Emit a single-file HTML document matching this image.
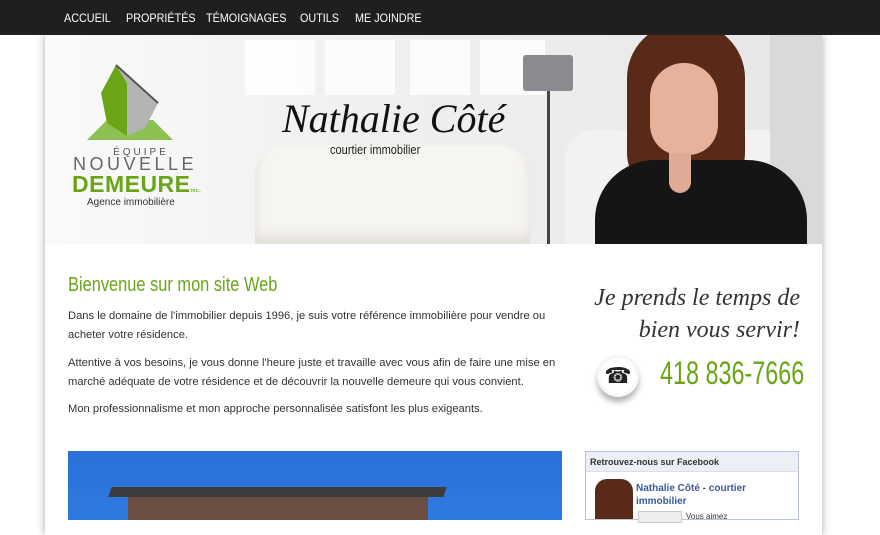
<!DOCTYPE html>
<html><head><meta charset="utf-8"><style>
*{margin:0;padding:0;box-sizing:border-box}
body{width:880px;height:520px;overflow:hidden;background:#fff;font-family:"Liberation Sans",sans-serif;position:relative}
.nav{position:absolute;left:0;top:0;width:880px;height:35px;background:#1f1f1f}
.nav span{position:absolute;top:11px;color:#fff;font-size:12px;white-space:nowrap;transform:scaleX(.9);transform-origin:left}
.wrap{position:absolute;left:45px;top:35px;width:777px;height:500px;background:#fff;box-shadow:0 0 8px rgba(0,0,0,.35)}
.hdr{position:absolute;left:45px;top:35px;width:777px;height:209px;background:linear-gradient(90deg,#fafafa 0%,#f0f0f0 40%,#ececec 70%,#e6e6e6 100%);overflow:hidden}
.win{position:absolute;background:#fff;opacity:.8}
.p{position:absolute;left:68px;color:#333;font-size:11.2px;line-height:19px;white-space:nowrap}
</style></head><body>
<div class="wrap"></div>
<div class="nav">
<span style="left:64px">ACCUEIL</span><span style="left:126px">PROPRIÉTÉS</span><span style="left:206px">TÉMOIGNAGES</span><span style="left:300px">OUTILS</span><span style="left:355px">ME JOINDRE</span>
</div>
<div class="hdr">
<div class="win" style="left:200px;top:5px;width:70px;height:55px"></div>
<div class="win" style="left:280px;top:5px;width:70px;height:55px"></div>
<div class="win" style="left:365px;top:5px;width:60px;height:55px"></div>
<div class="win" style="left:435px;top:5px;width:65px;height:55px"></div>
<div style="position:absolute;left:210px;top:110px;width:275px;height:99px;background:#f7f5f2;border-radius:30px 30px 0 0;box-shadow:inset 0 -8px 12px #e2dfda"></div>
<div style="position:absolute;left:520px;top:95px;width:240px;height:114px;background:#f3f2f0;border-radius:30px 30px 0 0"></div>
<div style="position:absolute;left:478px;top:20px;width:50px;height:36px;background:#8a8a90;border-radius:3px"></div>
<div style="position:absolute;left:502px;top:56px;width:3px;height:153px;background:#444"></div>
<div style="position:absolute;left:725px;top:0;width:52px;height:209px;background:#d9d9d9"></div>
<div style="position:absolute;left:582px;top:-12px;width:118px;height:175px;background:#5a2a18;border-radius:55px 55px 45px 45px"></div>
<div style="position:absolute;left:605px;top:28px;width:68px;height:92px;background:#e6b29b;border-radius:34px 34px 30px 30px"></div>
<div style="position:absolute;left:550px;top:125px;width:212px;height:100px;background:#151515;border-radius:60px 60px 0 0"></div>
<div style="position:absolute;left:624px;top:118px;width:22px;height:40px;background:#e0ab95;border-radius:0 0 11px 11px"></div>
<svg style="position:absolute;left:40px;top:28px" width="90" height="80" viewBox="0 0 90 80">
<polygon points="2,77 22,57 68,57 88,77" fill="#8cc152"/>
<polygon points="16,30 31,2 42,20 42,73 22,60" fill="#6aa518"/>
<polygon points="42,20 31,2 73,40 60,65 42,73" fill="#b4b4b4"/>
<polyline points="31,2 73,40" stroke="#555" stroke-width="2" fill="none"/>
</svg>
<div style="position:absolute;left:36px;top:112px;width:120px;text-align:center;font-size:10px;letter-spacing:3px;color:#555">ÉQUIPE</div>
<div style="position:absolute;left:28px;top:119px;font-size:18px;letter-spacing:3.5px;color:#666">NOUVELLE</div>
<div style="position:absolute;left:27px;top:136px;font-size:23px;font-weight:bold;color:#6aa518;letter-spacing:.5px">DEMEURE<span style="font-size:5px">inc.</span></div>
<div style="position:absolute;left:42px;top:162px;font-size:10px;color:#333">Agence immobilière</div>
<div style="position:absolute;left:237px;top:60px;font-family:'Liberation Serif',serif;font-style:italic;font-size:40px;color:#111">Nathalie Côté</div>
<div style="position:absolute;left:285px;top:107px;font-size:13px;color:#222;transform:scaleX(.85);transform-origin:left;white-space:nowrap">courtier immobilier</div>
</div>
<div style="position:absolute;left:68px;top:274px;color:#6aa518;font-size:20px;transform:scaleX(.82);transform-origin:left;white-space:nowrap">Bienvenue sur mon site Web</div>
<div class="p" style="top:307px">Dans le domaine de l'immobilier depuis 1996, je suis votre référence immobilière pour vendre ou<br>acheter votre résidence.</div>
<div class="p" style="top:354px">Attentive à vos besoins, je vous donne l'heure juste et travaille avec vous afin de faire une mise en<br>marché adéquate de votre résidence et de découvrir la nouvelle demeure qui vous convient.</div>
<div class="p" style="top:400px">Mon professionnalisme et mon approche personnalisée satisfont les plus exigeants.</div>
<div style="position:absolute;right:80px;top:282px;text-align:right;font-family:'Liberation Serif',serif;font-style:italic;font-size:24px;line-height:32px;color:#333">Je prends le temps de<br>bien vous servir!</div>
<div style="position:absolute;left:597px;top:355px;width:42px;height:42px;border-radius:50%;background:radial-gradient(#fff 55%,#ddd);box-shadow:0 5px 6px rgba(0,0,0,.3);text-align:center;line-height:42px;font-size:22px;color:#222">☎</div>
<div style="position:absolute;left:660px;top:355px;font-size:32px;color:#6aa518;transform:scaleX(.73);transform-origin:left;white-space:nowrap">418 836-7666</div>
<div style="position:absolute;left:68px;top:451px;width:494px;height:69px;background:linear-gradient(#2a70d8,#2f7ae0);overflow:hidden">
<div style="position:absolute;left:42px;top:36px;width:335px;height:10px;background:#3c3c3c;transform:skewX(-20deg)"></div>
<div style="position:absolute;left:60px;top:46px;width:300px;height:30px;background:#6b4e44"></div>
</div>
<div style="position:absolute;left:585px;top:451px;width:214px;height:69px;border:1px solid #b8c3d6;background:#fff">
<div style="height:20px;background:#eceff5;border-bottom:1px solid #d8dfea;font-size:9px;font-weight:bold;color:#333;padding:5px 4px">Retrouvez-nous sur Facebook</div>
<div style="position:absolute;left:9px;top:27px;width:38px;height:40px;background:#5a2a18;border-radius:12px 12px 0 0"></div>
<div style="position:absolute;left:50px;top:30px;font-size:10px;font-weight:bold;color:#3b5998;line-height:13px">Nathalie Côté - courtier<br>immobilier</div>
<div style="position:absolute;left:52px;top:59px;width:44px;height:12px;background:#eee;border:1px solid #ccc"></div>
<div style="position:absolute;left:100px;top:60px;font-size:8px;color:#333">Vous aimez</div>
</div>
</body></html>
